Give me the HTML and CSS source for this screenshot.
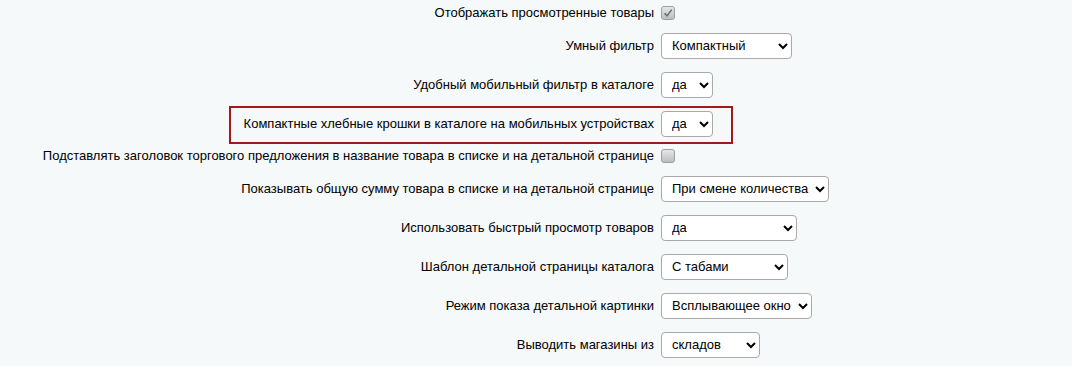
FILE: index.html
```html
<!DOCTYPE html>
<html lang="ru">
<head>
<meta charset="utf-8">
<title>Настройки каталога</title>
<link rel="stylesheet" href="styles.css">
</head>
<body>
<div class="settings">
  <div class="row row-check">
    <div class="label">Отображать просмотренные товары</div>
    <div class="ctrl"><span class="cb checked"><svg viewBox="0 0 14 14" width="14" height="14"><path d="M3.5 7.2 L6 9.8 L10.8 3.6" fill="none" stroke="#6f6f6f" stroke-width="1.5"/></svg></span></div>
  </div>
  <div class="row">
    <div class="label">Умный фильтр</div>
    <div class="ctrl"><select class="sel w130"><option>Компактный</option></select></div>
  </div>
  <div class="row">
    <div class="label">Удобный мобильный фильтр в каталоге</div>
    <div class="ctrl"><select class="sel w51"><option>да</option></select></div>
  </div>
  <div class="row highlighted">
    <div class="label">Компактные хлебные крошки в каталоге на мобильных устройствах</div>
    <div class="ctrl"><select class="sel w51"><option>да</option></select></div>
    <div class="mark"></div>
  </div>
  <div class="row row-check">
    <div class="label">Подставлять заголовок торгового предложения в название товара в списке и на детальной странице</div>
    <div class="ctrl"><span class="cb"></span></div>
  </div>
  <div class="row">
    <div class="label">Показывать общую сумму товара в списке и на детальной странице</div>
    <div class="ctrl"><select class="sel w167"><option>При смене количества</option></select></div>
  </div>
  <div class="row">
    <div class="label">Использовать быстрый просмотр товаров</div>
    <div class="ctrl"><select class="sel w135"><option>да</option></select></div>
  </div>
  <div class="row">
    <div class="label">Шаблон детальной страницы каталога</div>
    <div class="ctrl"><select class="sel w126"><option>С табами</option></select></div>
  </div>
  <div class="row">
    <div class="label">Режим показа детальной картинки</div>
    <div class="ctrl"><select class="sel w150"><option>Всплывающее окно</option></select></div>
  </div>
  <div class="row">
    <div class="label">Выводить магазины из</div>
    <div class="ctrl"><select class="sel w98"><option>складов</option></select></div>
  </div>
</div>
</body>
</html>
```
FILE: styles.css
```css
html, body {
  margin: 0;
  padding: 0;
  background: #f5f9f9;
}
body {
  font-family: "Liberation Sans", Arial, sans-serif;
  font-size: 13px;
  color: #000;
}
.settings {
  display: flex;
  flex-direction: column;
}
.row {
  position: relative;
  display: grid;
  grid-template-columns: 654px 1fr;
  column-gap: 7px;
  align-items: center;
  height: 39px;
}
.row-check {
  height: 26px;
}
.label {
  text-align: right;
  white-space: nowrap;
  line-height: 16px;
}
.ctrl {
  display: flex;
  align-items: center;
}
.sel {
  height: 26px;
  border: 1px solid #a9a9a9;
  border-radius: 4px;
  background-color: #fff;
  font-family: "Liberation Sans", Arial, sans-serif;
  font-size: 13px;
  color: #000;
  padding: 0 0 0 6px;
  margin: 0;
  box-sizing: border-box;
}
.w130 { width: 131px; }
.w51 { width: 52px; }
.w167 { width: 168px; }
.w135 { width: 136px; }
.w126 { width: 127px; }
.w150 { width: 151px; }
.w98 { width: 99px; }
.cb {
  display: inline-block;
  width: 14px;
  height: 14px;
  box-sizing: border-box;
  border: 1px solid #9d9d9d;
  border-radius: 3px;
  background: linear-gradient(#e6e6e6, #bdbdbd);
  position: relative;
}
.cb svg {
  position: absolute;
  left: -1px;
  top: -1px;
}
.mark {
  position: absolute;
  left: 229px;
  top: 2px;
  width: 504px;
  height: 38px;
  box-sizing: border-box;
  border: 2px solid #a11919;
  pointer-events: none;
}
```
